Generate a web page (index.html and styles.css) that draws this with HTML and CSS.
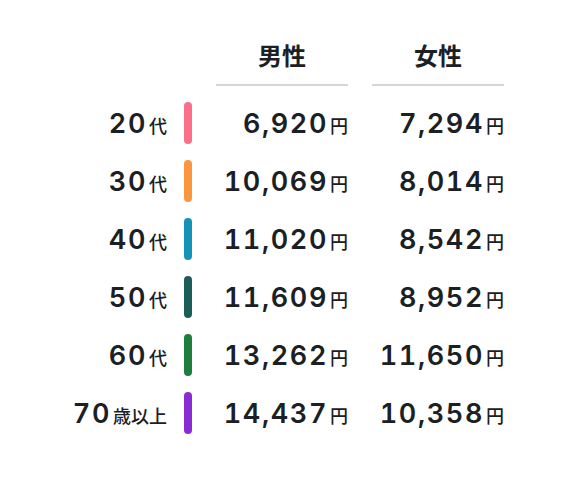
FILE: index.html
```html
<!DOCTYPE html>
<html lang="ja">
<head>
    <meta charset="UTF-8">
    <meta name="viewport" content="width=device-width, initial-scale=1.0">
    <title>年代別 平均</title>
    <link rel="stylesheet" href="styles.css">
</head>
<body>
    <div class="price-table">
        <div class="head-row">
            <span></span>
            <span></span>
            <div class="col-head">男性</div>
            <div class="col-head">女性</div>
        </div>

        <div class="row">
            <div class="age">20<small>代</small></div>
            <span class="bar bar-20"></span>
            <div class="price">6,920<small>円</small></div>
            <div class="price">7,294<small>円</small></div>
        </div>
        <div class="row">
            <div class="age">30<small>代</small></div>
            <span class="bar bar-30"></span>
            <div class="price">10,069<small>円</small></div>
            <div class="price">8,014<small>円</small></div>
        </div>
        <div class="row">
            <div class="age">40<small>代</small></div>
            <span class="bar bar-40"></span>
            <div class="price">11,020<small>円</small></div>
            <div class="price">8,542<small>円</small></div>
        </div>
        <div class="row">
            <div class="age">50<small>代</small></div>
            <span class="bar bar-50"></span>
            <div class="price">11,609<small>円</small></div>
            <div class="price">8,952<small>円</small></div>
        </div>
        <div class="row">
            <div class="age">60<small>代</small></div>
            <span class="bar bar-60"></span>
            <div class="price">13,262<small>円</small></div>
            <div class="price">11,650<small>円</small></div>
        </div>
        <div class="row">
            <div class="age">70<small>歳以上</small></div>
            <span class="bar bar-70"></span>
            <div class="price">14,437<small>円</small></div>
            <div class="price">10,358<small>円</small></div>
        </div>
    </div>
</body>
</html>
```

FILE: styles.css
```css
/* Page */
body {
    margin: 0;
    padding: 0;
    background: #fff;
    color: #1b2025;
    font-family: 'Inter', 'Noto Sans CJK JP', sans-serif;
}

.price-table {
    padding: 42px 0 0 40px;
}

/* Shared grid for header and rows */
.head-row,
.row {
    display: grid;
    grid-template-columns: 120px 8px 132px 132px;
    column-gap: 24px;
}

/* Header */
.head-row {
    align-items: end;
}

.col-head {
    text-align: center;
    font-size: 24px;
    font-weight: 700;
    line-height: 30px;
    padding-bottom: 12px;
    border-bottom: 2px solid #d6d6d6;
}

/* Rows */
.row {
    height: 42px;
    margin-top: 16px;
    align-items: center;
}

.age,
.price {
    font-size: 27px;
    font-weight: 600;
    font-variant-numeric: tabular-nums;
    letter-spacing: 1.6px;
    text-align: right;
    white-space: nowrap;
}

.age {
    margin-right: -7px;
}

.age small,
.price small {
    font-size: 18px;
    font-weight: 500;
    letter-spacing: 0;
    margin-left: 2px;
}

.bar {
    display: block;
    width: 8px;
    height: 42px;
    border-radius: 4px;
}

.bar-20 { background-color: #fb6f8a; }
.bar-30 { background-color: #fb963e; }
.bar-40 { background-color: #1593b6; }
.bar-50 { background-color: #1d5d58; }
.bar-60 { background-color: #1d7e3e; }
.bar-70 { background-color: #8a2bd6; }
```
